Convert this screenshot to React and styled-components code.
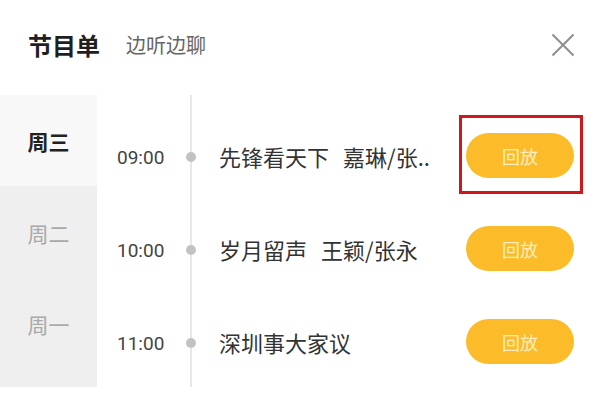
import React from "react";
import styled, { createGlobalStyle } from "styled-components";

const Global = createGlobalStyle`
  html, body { margin: 0; padding: 0; background: #fff; }
  body { font-family: "Noto Sans CJK SC", "Noto Sans", sans-serif; }
`;

const Page = styled.div`
  width: 600px;
  height: 400px;
  background: #fff;
  display: flex;
  flex-direction: column;
  overflow: hidden;
`;

const Header = styled.header`
  height: 95px;
  box-sizing: border-box;
  padding: 0 22px 6px 28px;
  display: flex;
  align-items: center;
`;

const Title = styled.h1`
  margin: 0;
  font-size: 24px;
  font-weight: 700;
  color: #1f1f1f;
  line-height: 1;
`;

const Subtitle = styled.span`
  margin-left: 26px;
  font-size: 20px;
  color: #666;
  line-height: 1;
`;

const Close = styled.button`
  margin-left: auto;
  width: 30px;
  height: 30px;
  padding: 0;
  border: 0;
  background: transparent;
  display: flex;
  align-items: center;
  justify-content: center;
`;

const Body = styled.div`
  display: flex;
  height: 292px;
`;

const Sidebar = styled.nav`
  width: 97px;
  background: #efefef;
  display: flex;
  flex-direction: column;
`;

const Tab = styled.div`
  height: 91px;
  display: flex;
  align-items: center;
  justify-content: center;
  padding-top: ${(p) => (p.$active ? "0" : "2px")};
  box-sizing: border-box;
  background: ${(p) => (p.$active ? "#f8f8f8" : "transparent")};
  color: ${(p) => (p.$active ? "#222" : "#a9a9a9")};
  font-weight: ${(p) => (p.$active ? 700 : 400)};
  font-size: 21px;
`;

const Schedule = styled.div`
  flex: 1;
  padding-top: 14px;
  background: linear-gradient(#e8e8e8, #e8e8e8) 93px 0 / 2px 100% no-repeat;
`;

const Row = styled.div`
  height: 93px;
  display: flex;
  align-items: center;
  padding: 0 26px 0 20px;
`;

const Time = styled.span`
  width: 62px;
  font-family: Roboto, "Noto Sans", sans-serif;
  font-size: 19px;
  color: #444;
  padding-top: 3px;
`;

const DotCell = styled.span`
  width: 24px;
  display: flex;
  justify-content: center;
  padding-top: 3px;
`;

const Dot = styled.span`
  width: 10px;
  height: 10px;
  border-radius: 50%;
  background: #c2c2c2;
`;

const Program = styled.div`
  flex: 1;
  margin-left: 16px;
  display: flex;
  gap: 14px;
  font-size: 22px;
  color: #333;
  white-space: nowrap;
  overflow: hidden;
`;

const ActionCell = styled.div`
  position: relative;
  display: flex;
`;

const Highlight = styled.span`
  position: absolute;
  top: -18px;
  bottom: -16px;
  left: -7px;
  right: -9px;
  border: 3px solid #d0171d;
  pointer-events: none;
`;

const Replay = styled.button`
  width: 108px;
  height: 45px;
  border: 0;
  border-radius: 23px;
  background: #fcbc2a;
  color: #fdeebf;
  font-family: "Noto Sans CJK SC", sans-serif;
  font-size: 18px;
  padding: 0;
`;

const days = [
  { label: "周三", active: true },
  { label: "周二" },
  { label: "周一" },
];

const programs = [
  { time: "09:00", name: "先锋看天下", host: "嘉琳/张..", marked: true },
  { time: "10:00", name: "岁月留声", host: "王颖/张永" },
  { time: "11:00", name: "深圳事大家议", host: "" },
];

export default function App() {
  return (
    <Page>
      <Global />
      <Header>
        <Title>节目单</Title>
        <Subtitle>边听边聊</Subtitle>
        <Close aria-label="关闭">
          <svg width="24" height="24" viewBox="0 0 24 24">
            <path d="M1.5 1.5 L22.5 22.5 M22.5 1.5 L1.5 22.5" stroke="#8f8f8f" strokeWidth="2" fill="none" />
          </svg>
        </Close>
      </Header>
      <Body>
        <Sidebar>
          {days.map((d) => (
            <Tab key={d.label} $active={d.active}>{d.label}</Tab>
          ))}
        </Sidebar>
        <Schedule>
          {programs.map((p) => (
            <Row key={p.time}>
              <Time>{p.time}</Time>
              <DotCell><Dot /></DotCell>
              <Program>
                <span>{p.name}</span>
                {p.host && <span>{p.host}</span>}
              </Program>
              <ActionCell>
                <Replay>回放</Replay>
                {p.marked && <Highlight />}
              </ActionCell>
            </Row>
          ))}
        </Schedule>
      </Body>
    </Page>
  );
}
